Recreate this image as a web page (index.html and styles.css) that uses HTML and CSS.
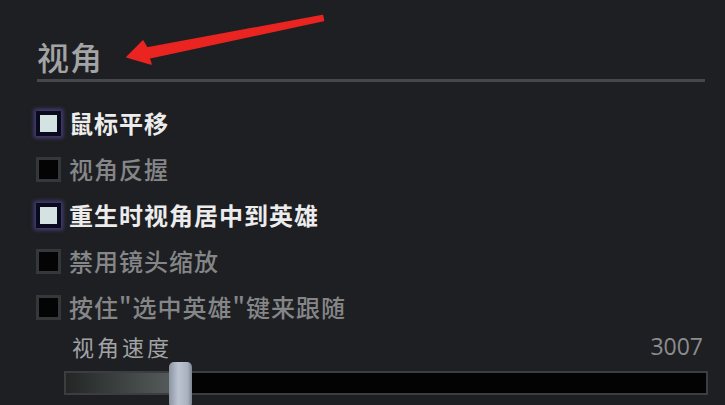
FILE: index.html
```html
<!DOCTYPE html>
<html lang="zh">
<head>
<meta charset="utf-8">
<link rel="stylesheet" href="styles.css">
</head>
<body>
<div class="panel">
  <h1 class="title">视角</h1>
  <div class="divider"></div>
  <ul class="options">
    <li class="opt on"><span class="box"></span><span class="label">鼠标平移</span></li>
    <li class="opt"><span class="box"></span><span class="label">视角反握</span></li>
    <li class="opt on"><span class="box"></span><span class="label">重生时视角居中到英雄</span></li>
    <li class="opt"><span class="box"></span><span class="label">禁用镜头缩放</span></li>
    <li class="opt"><span class="box"></span><span class="label">按住"选中英雄"键来跟随</span></li>
  </ul>
  <div class="speed">
    <div class="speed-head"><span class="speed-label">视角速度</span><span class="speed-val">3007</span></div>
    <div class="slider">
      <div class="fill"></div>
      <div class="thumb"></div>
    </div>
  </div>
</div>
<svg class="arrow" width="725" height="120" viewBox="0 0 725 120">
  <path d="M322.5 15.5 L147 48 L143 41 L127 57 L151 64 L149 58 L323.5 20.5 Z" fill="#ea2420" stroke="#ea2420" stroke-width="1.5" stroke-linejoin="round"/>
</svg>
</body>
</html>
```

FILE: styles.css
```css
html, body {
  margin: 0;
  padding: 0;
  background: #1e1f22;
  width: 725px;
  height: 405px;
  overflow: hidden;
  font-family: "Noto Sans CJK SC", "Noto Sans", sans-serif;
}
.panel {
  padding: 40px 17px 0 36px;
  display: flex;
  flex-direction: column;
}
.title {
  margin: 0 0 0 1px;
  font-size: 32px;
  line-height: 32px;
  font-weight: 500;
  color: #a3a4a6;
  letter-spacing: 1px;
}
.divider {
  margin: 7px 3px 0 1px;
  height: 3px;
  background: #46474a;
}
.options {
  list-style: none;
  margin: 18px 0 0 0;
  padding: 0;
}
.opt {
  height: 46px;
  display: flex;
  align-items: center;
  gap: 8px;
}
.box {
  width: 25px;
  height: 25px;
  box-sizing: border-box;
  border: 3px solid #36373a;
  background: #040404;
  flex: none;
}
.opt.on .box {
  border: 4px solid #0a0a1e;
  background: #d4e2e2;
  box-shadow: 0 0 4px 2px rgba(90, 80, 170, 0.65);
}
.label {
  font-size: 24px;
  line-height: 26px;
  letter-spacing: 1px;
  color: #858688;
  font-weight: 500;
}
.opt.on .label {
  color: #ececec;
  font-weight: 700;
}
.speed {
  padding-left: 28px;
}
.speed-head {
  display: flex;
  justify-content: space-between;
  align-items: center;
  margin-top: 4px;
  padding: 0 5px 0 8px;
}
.speed-label {
  font-size: 22px;
  line-height: 24px;
  letter-spacing: 3px;
  color: #a2a3a5;
}
.speed-val {
  font-family: "Open Sans", "Liberation Sans", sans-serif;
  font-size: 23px;
  line-height: 24px;
  color: #8c8d8f;
}
.slider {
  position: relative;
  margin-top: 13px;
  height: 24px;
  box-sizing: border-box;
  border: 2px solid #3c3d40;
  background: #030303;
}
.fill {
  width: 104px;
  height: 100%;
  background: linear-gradient(to right, #242626, #3c4040 50%, #545a5a);
}
.thumb {
  position: absolute;
  left: 103px;
  top: -11px;
  width: 23px;
  height: 46px;
  border-radius: 5px;
  background: linear-gradient(to right, #8c94a0, #bcc4d2 40%, #aab2c0 80%, #7d8490);
}
.arrow {
  position: absolute;
  left: 0;
  top: 0;
}
```
